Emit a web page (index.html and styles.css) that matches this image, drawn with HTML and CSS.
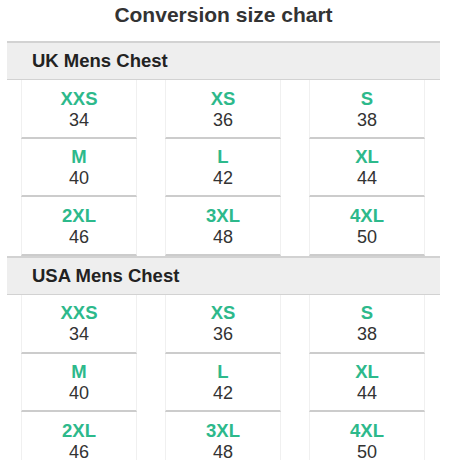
FILE: index.html
```html
<!DOCTYPE html>
<html>
<head>
<meta charset="utf-8">
<link rel="stylesheet" href="styles.css">
</head>
<body>
<div class="chart">
  <h1 class="title">Conversion size chart</h1>
  <section class="group">
    <h2 class="group-head">UK Mens Chest</h2>
    <div class="grid">
      <div class="cell"><span class="size">XXS</span><span class="num">34</span></div>
      <div class="cell"><span class="size">XS</span><span class="num">36</span></div>
      <div class="cell"><span class="size">S</span><span class="num">38</span></div>
      <div class="cell"><span class="size">M</span><span class="num">40</span></div>
      <div class="cell"><span class="size">L</span><span class="num">42</span></div>
      <div class="cell"><span class="size">XL</span><span class="num">44</span></div>
      <div class="cell"><span class="size">2XL</span><span class="num">46</span></div>
      <div class="cell"><span class="size">3XL</span><span class="num">48</span></div>
      <div class="cell"><span class="size">4XL</span><span class="num">50</span></div>
    </div>
  </section>
  <section class="group">
    <h2 class="group-head">USA Mens Chest</h2>
    <div class="grid">
      <div class="cell"><span class="size">XXS</span><span class="num">34</span></div>
      <div class="cell"><span class="size">XS</span><span class="num">36</span></div>
      <div class="cell"><span class="size">S</span><span class="num">38</span></div>
      <div class="cell"><span class="size">M</span><span class="num">40</span></div>
      <div class="cell"><span class="size">L</span><span class="num">42</span></div>
      <div class="cell"><span class="size">XL</span><span class="num">44</span></div>
      <div class="cell"><span class="size">2XL</span><span class="num">46</span></div>
      <div class="cell"><span class="size">3XL</span><span class="num">48</span></div>
      <div class="cell"><span class="size">4XL</span><span class="num">50</span></div>
    </div>
  </section>
</div>
</body>
</html>
```

FILE: styles.css
```css
html, body {
  margin: 0;
  padding: 0;
  background: #ffffff;
}
body {
  font-family: "Liberation Sans", Arial, sans-serif;
}
.chart {
  width: 433px;
  margin-left: 7px;
}
.title {
  margin: 0 0 14px 0;
  padding-top: 3px;
  font-size: 21px;
  line-height: 24px;
  font-weight: bold;
  color: #333333;
  text-align: center;
}
.group-head {
  margin: 0;
  height: 36px;
  line-height: 35px;
  padding-left: 25px;
  font-size: 18.5px;
  font-weight: bold;
  color: #222222;
  background: #eeeeee;
  border-top: 2px solid #d2d2d2;
  border-bottom: 1px solid #d2d2d2;
}
.grid {
  display: grid;
  grid-template-columns: repeat(3, 116px);
  column-gap: 28px;
  padding: 0 14px;
}
.cell {
  box-sizing: border-box;
  height: 58.67px;
  padding-top: 9.5px;
  display: flex;
  flex-direction: column;
  align-items: center;
  background: #ffffff;
  border-left: 1px solid #f0f0f0;
  border-right: 1px solid #f0f0f0;
  border-bottom: 2px solid #cccccc;
}
.size {
  font-size: 18.5px;
  line-height: 18px;
  font-weight: bold;
  color: #2db98b;
}
.num {
  margin-top: 3px;
  font-size: 18px;
  line-height: 18px;
  color: #333333;
}
```
